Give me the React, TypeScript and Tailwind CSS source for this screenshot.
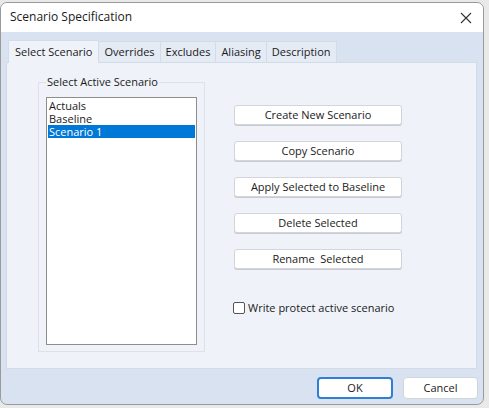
import React, { useState } from 'react';

const font = { fontFamily: '"Open Sans", "Noto Sans", sans-serif' };

const tabs = ['Select Scenario', 'Overrides', 'Excludes', 'Aliasing', 'Description'];
const actions = ['Create New Scenario', 'Copy Scenario', 'Apply Selected to Baseline', 'Delete Selected', 'Rename  Selected'];
const scenarios = ['Actuals', 'Baseline', 'Scenario 1'];

export default function App() {
  const [tab, setTab] = useState(0);
  const [sel, setSel] = useState(2);

  return (
    <div className="w-[489px] h-[408px] bg-[#e9e9e9] pt-[2px] overflow-hidden text-[#1a1a1a] text-[11px]" style={font}>
      <div className="w-[484px] h-[403px] border border-[#9a9a9a] rounded-[7px] overflow-hidden flex flex-col bg-[#d8e2f0]">
        {/* title bar */}
        <div className="h-[29px] bg-white flex items-center justify-between pl-[9px] pr-[10px] shrink-0">
          <span className="text-[12px] relative top-[-1px]">Scenario Specification</span>
          <svg width="12" height="12" viewBox="0 0 12 12" className="mr-[1px]">
            <path d="M1 1 L11 11 M11 1 L1 11" stroke="#333" strokeWidth="1.1" />
          </svg>
        </div>

        <div className="flex flex-col px-[5px] pt-[7px]">
          {/* tabs */}
          <div className="flex items-end h-[23px] pl-[2px]">
            {tabs.map((t, i) => (
              <button
                key={t}
                onClick={() => setTab(i)}
                className={
                  i === tab
                    ? 'h-[23px] px-[6px] bg-[#eff3f9] border border-b-0 border-[#d3dbe6] relative top-[1px]'
                    : 'h-[21px] px-[5px] bg-[#e4ebf5] border border-l-0 border-b-0 border-[#d3dbe6] first:border-l'
                }
              >
                {t}
              </button>
            ))}
          </div>

          {/* panel */}
          <div className="h-[307px] w-[471px] bg-[#eff3f9] border border-[#d3dbe6] flex pt-[12px]">
            <fieldset className="ml-[31px] w-[167px] h-[277px] border border-[#dde2ea] px-[7px] pt-[8px] pb-[7px]">
              <legend className="px-[1px] leading-[14px]">Select Active Scenario</legend>
              <div className="h-[248px] bg-white border border-[#8e8e8e] pt-[1px] px-[1px]">
                {scenarios.map((s, i) => (
                  <div
                    key={s}
                    onClick={() => setSel(i)}
                    className={'h-[13px] leading-[13px] pl-[1px] overflow-hidden ' + (i === sel ? 'bg-[#0078d7] text-white' : '')}
                  >
                    {s}
                  </div>
                ))}
              </div>
            </fieldset>

            <div className="ml-[29px] pt-[30px] flex flex-col">
              <div className="flex flex-col gap-[16px]">
                {actions.map((a) => (
                  <button
                    key={a}
                    className="w-[168px] h-[20px] bg-white border border-[#d2d5da] rounded-[3px] shadow-[0_1px_0_#c8ccd2] whitespace-pre"
                  >
                    {a}
                  </button>
                ))}
              </div>
              <label className="flex items-center gap-[3px] mt-[31px] ml-[-1px]">
                <span className="w-[12px] h-[12px] border border-[#555] rounded-[2px] bg-white" />
                <span>Write protect active scenario</span>
              </label>
            </div>
          </div>

          {/* footer */}
          <div className="flex justify-end gap-[10px] pt-[8px]">
            <button className="w-[76px] h-[22px] bg-white border-2 border-[#2f7fd4] rounded-[4px]">OK</button>
            <button className="w-[75px] h-[22px] bg-white border border-[#d2d5da] rounded-[4px]">Cancel</button>
          </div>
        </div>
      </div>
    </div>
  );
}
